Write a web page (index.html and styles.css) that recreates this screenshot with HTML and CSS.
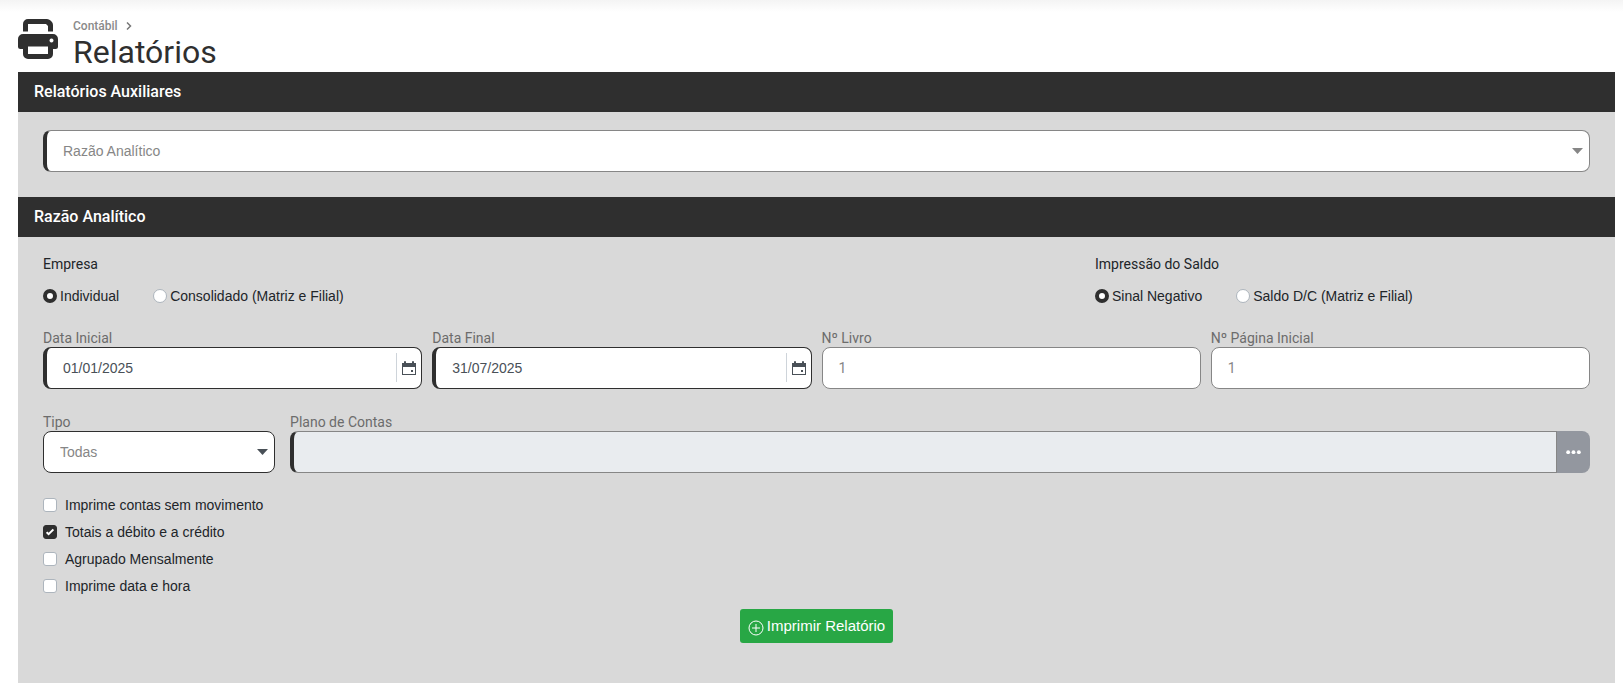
FILE: index.html
```html
<!DOCTYPE html>
<html lang="pt-BR">
<head>
    <meta charset="UTF-8">
    <meta name="viewport" content="width=device-width, initial-scale=1.0">
    <title>Relatórios</title>
    <link rel="stylesheet" href="styles.css">
</head>
<body>

<main class="page">
    <header class="page-header">
        <svg class="page-icon" viewBox="0 0 40 40" aria-hidden="true">
            <path d="M5 12.500V5a5 5 0 0 1 5-5h19a5 5 0 0 1 3.500 1.500l1 1A5 5 0 0 1 35 6v6.500h-5V7l-2-2H10v7.500z"/>
            <path fill-rule="evenodd" d="M5 15h30a5 5 0 0 1 5 5v7.500a2.500 2.500 0 0 1-2.500 2.500H35v5a5 5 0 0 1-5 5H10a5 5 0 0 1-5-5v-5H2.500A2.500 2.500 0 0 1 0 27.500V20a5 5 0 0 1 5-5zM10 27.500V35h20v-7.500zM33.500 19.500a2 2 0 1 0 .01 0z"/>
        </svg>
        <div class="page-heading">
            <nav class="breadcrumb">
                <a href="#">Contábil</a>
                <svg class="chevron" viewBox="0 0 6 8" aria-hidden="true"><path d="M1 0.500L4.500 4L1 7.500"/></svg>
            </nav>
            <h1>Relatórios</h1>
        </div>
    </header>

    <section>
        <h2 class="panel-title">Relatórios Auxiliares</h2>
        <div class="panel">
            <div class="control required">
                <select aria-label="Relatórios Auxiliares">
                    <option>Razão Analítico</option>
                </select>
                <svg class="arrow" viewBox="0 0 11 6" aria-hidden="true"><path d="M0 0h11L5.500 6z"/></svg>
            </div>
        </div>
    </section>

    <section>
        <h2 class="panel-title">Razão Analítico</h2>
        <form class="panel panel-form">
            <div class="options">
                <fieldset class="company">
                    <legend>Empresa</legend>
                    <div class="radios">
                        <label class="radio"><input type="radio" name="empresa" checked>Individual</label>
                        <label class="radio"><input type="radio" name="empresa">Consolidado (Matriz e Filial)</label>
                    </div>
                </fieldset>
                <fieldset>
                    <legend>Impressão do Saldo</legend>
                    <div class="radios">
                        <label class="radio"><input type="radio" name="saldo" checked>Sinal Negativo</label>
                        <label class="radio"><input type="radio" name="saldo">Saldo D/C (Matriz e Filial)</label>
                    </div>
                </fieldset>
            </div>

            <div class="row">
                <div class="field">
                    <label for="data-inicial">Data Inicial</label>
                    <div class="control required dark">
                        <input class="date" type="text" id="data-inicial" value="01/01/2025">
                        <button type="button" class="calendar" aria-label="Abrir calendário">
                            <svg viewBox="0 0 14 14" aria-hidden="true"><path fill-rule="evenodd" d="M0 2h2V1a1 1 0 0 1 2 0v1h6V1a1 1 0 0 1 2 0v1h2v12H0zM1 6v7h12V6zM9 9h2v2H9z"/></svg>
                        </button>
                    </div>
                </div>
                <div class="field">
                    <label for="data-final">Data Final</label>
                    <div class="control required dark">
                        <input class="date" type="text" id="data-final" value="31/07/2025">
                        <button type="button" class="calendar" aria-label="Abrir calendário">
                            <svg viewBox="0 0 14 14" aria-hidden="true"><path fill-rule="evenodd" d="M0 2h2V1a1 1 0 0 1 2 0v1h6V1a1 1 0 0 1 2 0v1h2v12H0zM1 6v7h12V6zM9 9h2v2H9z"/></svg>
                        </button>
                    </div>
                </div>
                <div class="field">
                    <label for="livro">Nº Livro</label>
                    <div class="control">
                        <input class="number" type="text" id="livro" value="1">
                    </div>
                </div>
                <div class="field">
                    <label for="pagina">Nº Página Inicial</label>
                    <div class="control">
                        <input class="number" type="text" id="pagina" value="1">
                    </div>
                </div>
            </div>

            <div class="row row-accounts">
                <div class="field type">
                    <label for="tipo">Tipo</label>
                    <div class="control dark">
                        <select id="tipo">
                            <option>Todas</option>
                        </select>
                        <svg class="arrow" viewBox="0 0 11 6" aria-hidden="true"><path d="M0 0h11L5.500 6z"/></svg>
                    </div>
                </div>
                <div class="field">
                    <label for="plano">Plano de Contas</label>
                    <div class="lookup">
                        <div class="control required readonly">
                            <input type="text" id="plano" readonly>
                        </div>
                        <button type="button" class="lookup-button" aria-label="Buscar conta">
                            <svg viewBox="0 0 14 4" aria-hidden="true"><circle cx="2" cy="2" r="1.800"/><circle cx="7" cy="2" r="1.800"/><circle cx="12" cy="2" r="1.800"/></svg>
                        </button>
                    </div>
                </div>
            </div>

            <div class="checks">
                <label class="check"><input type="checkbox">Imprime contas sem movimento</label>
                <label class="check"><input type="checkbox" checked>Totais a débito e a crédito</label>
                <label class="check"><input type="checkbox">Agrupado Mensalmente</label>
                <label class="check"><input type="checkbox">Imprime data e hora</label>
            </div>

            <div class="actions">
                <button type="submit" class="print-button">
                    <svg viewBox="0 0 16 16" aria-hidden="true"><circle cx="8" cy="8" r="7"/><path d="M8 4v8M4 8h8"/></svg>
                    Imprimir Relatório
                </button>
            </div>
        </form>
    </section>
</main>

</body>
</html>
```

FILE: styles.css
```css
* {
    box-sizing: border-box;
}
body {
    margin: 0;
    background: #fff linear-gradient(#f4f4f4, #fff) no-repeat 0 0 / 100% 12px;
    color: #212529;
    font-family: "Liberation Sans", Arial, sans-serif;
    font-size: 14px;
    line-height: 20px;
}
input,
select,
button {
    font: inherit;
    margin: 0;
}
.page {
    padding: 18px 8px 10px 18px;
}

/* header */
.page-header {
    display: flex;
    gap: 15px;
    height: 54px;
}
.page-icon {
    width: 40px;
    height: 40px;
    margin-top: 1px;
    fill: #2f2f2f;
}
.page-heading {
    font-family: Roboto, sans-serif;
}
.breadcrumb {
    display: flex;
    align-items: center;
    gap: 8px;
    font-size: 12px;
    font-weight: 500;
    line-height: 16px;
}
.breadcrumb a {
    color: #8a8a8a;
    text-decoration: none;
}
.chevron {
    width: 6px;
    height: 8px;
    fill: none;
    stroke: #777;
    stroke-width: 1.5;
}
h1 {
    margin: 0;
    color: #2f2f2f;
    font-size: 32px;
    font-weight: 400;
    line-height: 36px;
}

/* panels */
.panel-title {
    margin: 0;
    padding: 0 16px;
    background: #2f2f2f;
    color: #fff;
    font-family: Roboto, sans-serif;
    font-size: 16px;
    font-weight: 500;
    line-height: 40px;
}
.panel {
    padding: 18px 25px 25px;
    background: #d9d9d9;
}
.panel-form {
    padding: 17px 25px 40px;
}

/* fields */
.control {
    position: relative;
    display: flex;
    flex: 1;
    height: 42px;
    background: #fff;
    border: 1px solid #868686;
    border-radius: 8px;
    color: #868686;
    overflow: hidden;
}
.control.dark {
    border-color: #2f2f2f;
}
.control.required {
    border-left: 4px solid #2f2f2f;
}
.control input,
.control select {
    flex: 1;
    min-width: 0;
    padding: 0 16px;
    background: transparent;
    border: 0;
    outline: 0;
    color: inherit;
    appearance: none;
}
.control .date {
    color: #495057;
}
.control .number {
    font-family: Roboto, sans-serif;
}
.arrow {
    position: absolute;
    top: 17px;
    right: 6px;
    width: 11px;
    height: 6px;
    fill: currentColor;
    pointer-events: none;
}
.dark .arrow {
    fill: #495057;
}
.calendar {
    display: flex;
    align-items: center;
    height: 29px;
    margin: 5px 0;
    padding: 0 5px;
    background: none;
    border: 0;
    border-left: 1px solid #ced4da;
}
.calendar svg {
    width: 14px;
    height: 14px;
    fill: #495057;
}
.row {
    display: flex;
    gap: 10px;
    margin-bottom: 24px;
}
.row-accounts {
    gap: 15px;
    margin-bottom: 22px;
}
.field {
    flex: 1;
}
.field.type {
    flex: 0 0 15%;
}
.field label {
    display: block;
    color: #6c6c6c;
    font-family: Roboto, sans-serif;
    line-height: 18px;
}
.lookup {
    display: flex;
}
.control.readonly {
    background: #e9ecef;
    border-radius: 8px 0 0 8px;
}
.lookup-button {
    display: flex;
    align-items: center;
    padding: 0 9px;
    background: #93979f;
    border: 0;
    border-radius: 0 8px 8px 0;
}
.lookup-button svg {
    width: 15px;
    fill: #fff;
}

/* radios and checkboxes */
.options {
    display: flex;
    margin-bottom: 23px;
}
fieldset {
    margin: 0;
    padding: 0;
    border: 0;
}
.company {
    flex: 0 0 68%;
}
legend {
    margin-bottom: 12px;
    padding: 0;
    font-family: Roboto, sans-serif;
}
.radios {
    display: flex;
    gap: 34px;
}
.radio,
.check {
    display: flex;
    align-items: center;
    gap: 3px;
}
.radio input,
.check input {
    width: 14px;
    height: 14px;
    background: #fff;
    border: 1px solid #adb5bd;
    border-radius: 50%;
    appearance: none;
}
.radio input:checked {
    border: 4px solid #2f2f2f;
}
.checks {
    display: grid;
    gap: 7px;
    margin-bottom: 13px;
}
.check {
    gap: 8px;
}
.check input {
    border-radius: 3px;
}
.check input:checked {
    background: #2f2f2f url("data:image/svg+xml,%3Csvg xmlns='http://www.w3.org/2000/svg' viewBox='0 0 8 8'%3E%3Cpath fill='none' stroke='%23fff' stroke-width='2' d='M.600 4.200l2 2L7.400 1.500'/%3E%3C/svg%3E") no-repeat center / 8px;
    border-color: #2f2f2f;
}

/* actions */
.actions {
    display: flex;
    justify-content: center;
}
.print-button {
    display: flex;
    align-items: center;
    gap: 3px;
    height: 34px;
    padding: 0 8px;
    background: #28a745;
    border: 0;
    border-radius: 3px;
    color: #fff;
    font-size: 15px;
}
.print-button svg {
    width: 16px;
    height: 16px;
    margin-top: 3px;
    fill: none;
    stroke: #fff;
}
```
